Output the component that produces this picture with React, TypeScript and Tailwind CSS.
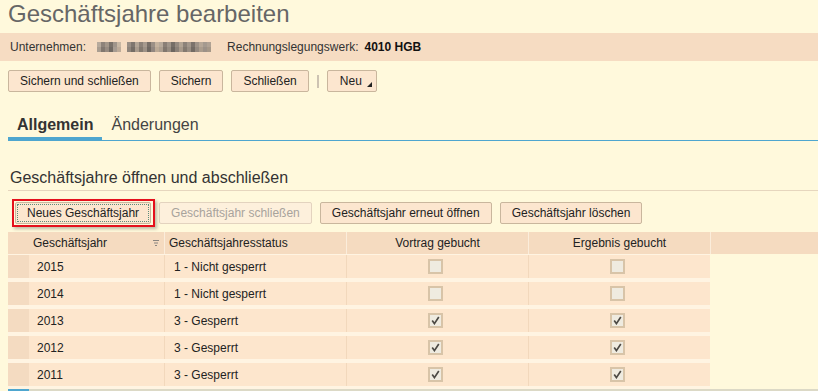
import React from "react";

const word1Top = ["#b7aa9d", "#8e837a", "#a39689", "#7a726b", "#a0958b", "#c7b7a4"];
const word1Bot = ["#a99d91", "#81776f", "#978b81", "#716a64", "#a69b91", "#bdab99"];
const word2Top = [
  "#9a8f86", "#7f766f", "#b3a596", "#8d8279", "#a79a8e", "#786f68", "#9c9086", "#c5b39f", "#b8aa9b", "#8a7f76",
  "#a0958a", "#766e67", "#958a80", "#b1a393", "#8c8279", "#a3978b", "#7c736c", "#9f9388", "#b6a797", "#a59a8f",
  "#b0a294",
];
const word2Bot = [
  "#8f857c", "#756d66", "#a99b8d", "#83796f", "#9d9186", "#6f6862", "#928780", "#bcaa96", "#ad9f90", "#81776e",
  "#978c81", "#6d6660", "#8b8178", "#a7998a", "#83796f", "#998e83", "#736b64", "#958a80", "#ab9d8d", "#9c9187",
  "#a69888",
];

function Mosaic() {
  return (
    <div className="flex h-[10px] ml-[11px]">
      <div className="flex">
        {word1Top.map((c, i) => (
          <div key={i} className="w-[4px] flex flex-col">
            <div className="h-[5px]" style={{ background: c }} />
            <div className="h-[5px]" style={{ background: word1Bot[i] }} />
          </div>
        ))}
      </div>
      <div className="w-[6px]" />
      <div className="flex">
        {word2Top.map((c, i) => (
          <div key={i} className="w-[4px] flex flex-col">
            <div className="h-[5px]" style={{ background: c }} />
            <div className="h-[5px]" style={{ background: word2Bot[i] }} />
          </div>
        ))}
      </div>
    </div>
  );
}

function Btn({ children, disabled }: { children: React.ReactNode; disabled?: boolean }) {
  return (
    <div
      className={
        "h-[22px] px-[11px] flex items-center rounded-[2px] border text-[12px] leading-none whitespace-nowrap " +
        (disabled
          ? "bg-[#fdf0dc] border-[#e3d3bf] text-[#a8a39c]"
          : "bg-[#fce6cf] border-[#c9b69d] text-[#222]")
      }
    >
      {children}
    </div>
  );
}

function Cb({ checked }: { checked?: boolean }) {
  return (
    <div className="w-[15px] h-[15px] border-2 border-[#d8c4a8] bg-[#efebe0] flex items-center justify-center">
      {checked && (
        <svg width="9" height="9" viewBox="0 0 9 9">
          <path d="M1.2 4.6 L3.4 7.6 L7.8 1" fill="none" stroke="#4d4a45" strokeWidth="1.7" />
        </svg>
      )}
    </div>
  );
}

const rows = [
  { y: "2015", s: "1 - Nicht gesperrt", c: false },
  { y: "2014", s: "1 - Nicht gesperrt", c: false },
  { y: "2013", s: "3 - Gesperrt", c: true },
  { y: "2012", s: "3 - Gesperrt", c: true },
  { y: "2011", s: "3 - Gesperrt", c: true },
];

function Cell({
  w,
  first,
  sel,
  children,
  className,
}: {
  w: string;
  first?: boolean;
  sel?: boolean;
  children?: React.ReactNode;
  className?: string;
}) {
  return (
    <div className={"pt-px pb-[3px] bg-[#fff4e2] " + w}>
      <div
        className={
          "h-[23px] flex items-center " +
          (sel ? "bg-[#f4dbc1] " : "bg-[#fde6cd] ") +
          (first ? "" : "border-l border-[#f2d8bc] ") +
          (className || "")
        }
      >
        {children}
      </div>
    </div>
  );
}

export default function App() {
  return (
    <div className="w-full h-[391px] overflow-hidden bg-[#fff9dc] font-['Liberation_Sans',Arial,sans-serif] text-[#222]">
      <div className="h-[33px] pl-[8px] text-[24px] leading-[28px] text-[#666]">Geschäftsjahre bearbeiten</div>

      <div className="h-[28px] bg-[#f6dcc2] flex items-center pl-[10px] text-[12px] text-[#333]">
        <span>Unternehmen:</span>
        <Mosaic />
        <span className="ml-[16px]">Rechnungslegungswerk:</span>
        <span className="ml-[6px] font-bold text-[#111]">4010 HGB</span>
      </div>

      <div className="mt-[9px] pl-[8px] flex items-center gap-[8px]">
        <Btn>Sichern und schließen</Btn>
        <Btn>Sichern</Btn>
        <Btn>Schließen</Btn>
        <div className="w-[2px] h-[13px] bg-[#cdc3b2]" />
        <div className="h-[22px] pl-[12px] pr-[4px] flex items-center rounded-[2px] border border-[#c9b69d] bg-[#fce6cf] text-[12px] leading-none text-[#222]">
          <span>Neu</span>
          <svg className="ml-[5px] mt-[6px]" width="5" height="5" viewBox="0 0 5 5">
            <path d="M5 0 L5 5 L0 5 Z" fill="#222" />
          </svg>
        </div>
      </div>

      <div className="mt-[23px] ml-[8px] flex border-b border-[#4ea6cf]">
        <div className="px-[9px] pb-[2px] text-[16px] leading-[20px] font-bold text-[#333] border-b-4 border-[#4ea6cf] -mb-px">
          Allgemein
        </div>
        <div className="px-[9px] pb-[2px] text-[16px] leading-[20px] text-[#444] border-b-4 border-transparent -mb-px">
          Änderungen
        </div>
      </div>

      <div className="mt-[27px] ml-[8px] pl-[2px] pb-[2px] text-[16px] leading-[20px] text-[#333] border-b border-[#e6d6be]">
        Geschäftsjahre öffnen und abschließen
      </div>

      <div className="mt-[11px] pl-[15px] flex items-center gap-[8px]">
        <div className="relative">
          <Btn>Neues Geschäftsjahr</Btn>
          <div className="absolute inset-[2px] border border-dotted border-[#5d8c7c] pointer-events-none" />
          <div className="absolute -left-[3px] -top-[3px] -right-[4px] -bottom-[3px] border-2 border-[#e5101c] shadow-[2px_2px_3px_rgba(0,0,0,0.25)] pointer-events-none" />
        </div>
        <Btn disabled>Geschäftsjahr schließen</Btn>
        <Btn>Geschäftsjahr erneut öffnen</Btn>
        <Btn>Geschäftsjahr löschen</Btn>
      </div>

      <div className="mt-[8px] ml-[8px]">
        <div className="flex h-[22px] bg-[#f5dbc0] text-[12px] text-[#222]">
          <div className="w-[21px]" />
          <div className="w-[135px] pl-[4px] pr-[5px] flex items-center justify-between">
            <span>Geschäftsjahr</span>
            <svg width="6" height="6" viewBox="0 0 6 6">
              <path d="M0 0.5 H6 M1 3 H5 M2 5.5 H4" stroke="#8a8580" strokeWidth="1" />
            </svg>
          </div>
          <div className="w-[182px] border-l border-[#fbeddb] pl-[4px] flex items-center">Geschäftsjahresstatus</div>
          <div className="w-[182px] border-l border-[#fbeddb] flex items-center justify-center">Vortrag gebucht</div>
          <div className="w-[182px] border-l border-[#fbeddb] flex items-center justify-center">Ergebnis gebucht</div>
          <div className="flex-1 border-l border-[#fbeddb]" />
        </div>

        {rows.map((r) => (
          <div key={r.y} className="flex h-[27px] text-[12px] text-[#222]">
            <Cell w="w-[21px]" first sel />
            <Cell w="w-[135px]" first className="pl-[8px]">
              {r.y}
            </Cell>
            <Cell w="w-[182px]" className="pl-[9px]">
              {r.s}
            </Cell>
            <Cell w="w-[182px]" className="justify-center pr-[5px]">
              <Cb checked={r.c} />
            </Cell>
            <Cell w="w-[182px]" className="justify-center pr-[5px]">
              <Cb checked={r.c} />
            </Cell>
            <div className="flex-1" />
          </div>
        ))}
        <div className="flex h-[2px]">
          <div className="w-[21px] bg-[#4ea6cf]" />
          <div className="flex-1 bg-[#dcd9c6]" />
        </div>
      </div>
    </div>
  );
}
